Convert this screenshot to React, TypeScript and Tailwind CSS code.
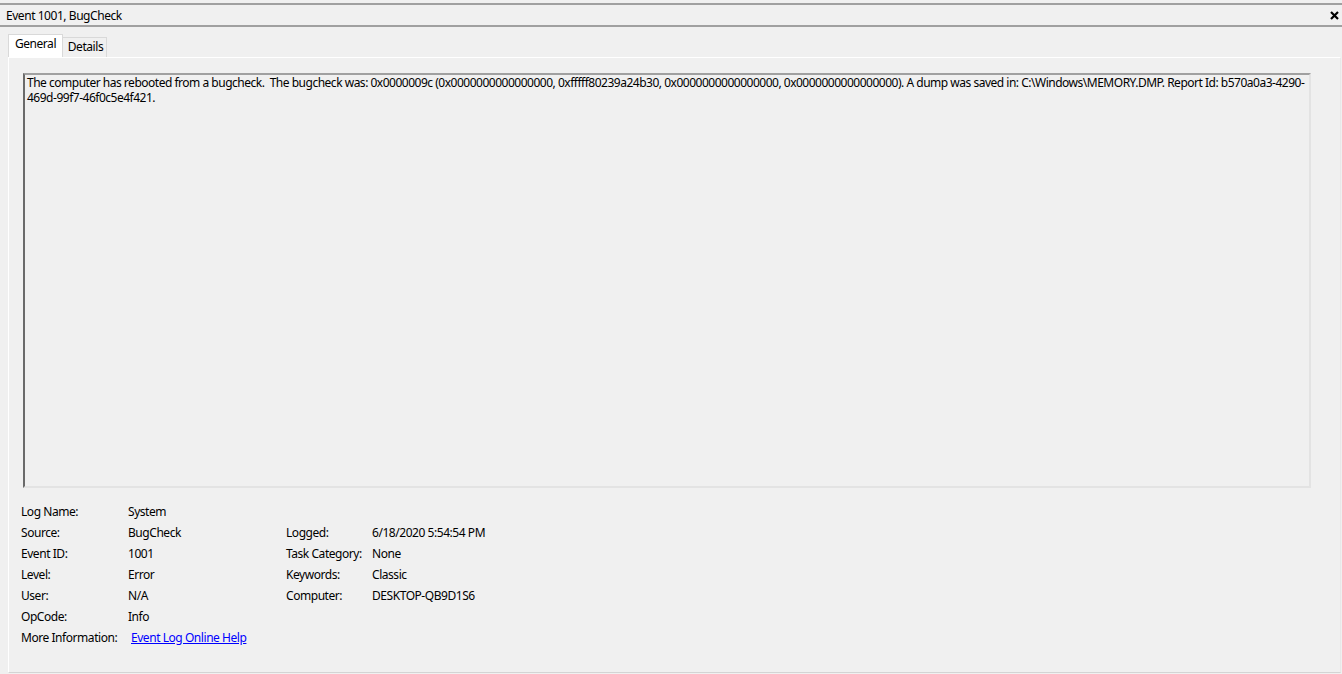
import React from "react";

const rows: [string, React.ReactNode, string?, string?][] = [
  ["Log Name:", "System"],
  ["Source:", "BugCheck", "Logged:", "6/18/2020 5:54:54 PM"],
  ["Event ID:", "1001", "Task Category:", "None"],
  ["Level:", "Error", "Keywords:", "Classic"],
  ["User:", "N/A", "Computer:", "DESKTOP-QB9D1S6"],
  ["OpCode:", "Info"],
];

export default function App() {
  return (
    <div className="w-[1342px] h-[674px] bg-[#f0f0f0] flex flex-col text-[12px] tracking-[-0.45px] text-black font-['Noto_Sans','Liberation_Sans',sans-serif] overflow-hidden">
      <div className="h-[3px] shrink-0" />
      <div className="h-[2px] bg-[#a0a0a0] shrink-0" />
      <div className="h-[20px] shrink-0 flex items-center justify-between pl-[6px] pr-[3px]">
        <span className="leading-[16px] pt-[1px]">Event 1001, BugCheck</span>
        <svg width="9" height="9" viewBox="0 0 9 9">
          <path d="M1 1 L8 8 M8 1 L1 8" stroke="#000" strokeWidth="2.2" />
        </svg>
      </div>
      <div className="h-[2px] bg-[#a0a0a0] shrink-0" />
      <div className="h-[7px] shrink-0" />
      <div className="flex items-end pl-[8px] shrink-0 h-[23px]">
        <div className="h-[23px] w-[55px] bg-white border border-b-0 border-[#d9d9d9] flex items-start justify-center pt-[1px] leading-[16px] relative z-10">
          General
        </div>
        <div className="h-[20px] w-[44px] bg-[#f0f0f0] border border-l-0 border-b-0 border-[#d9d9d9] flex items-start justify-center pt-[1px] pl-[2px] leading-[16px]">
          Details
        </div>
      </div>
      <div className="ml-[8px] mr-[1px] h-[616px] shrink-0 border-t border-l border-white border-b border-r border-b-[#d4d4d4] border-r-[#e8e8e8] bg-[#f0f0f0] flex flex-col">
        <div className="ml-[14px] mt-[15px] w-[1288px] h-[415px] border-t-2 border-l-2 border-t-[#a0a0a0] border-l-[#6a6a6a] border-r-2 border-b-2 border-r-[#e3e3e3] border-b-[#e3e3e3] px-[2px] pt-0 leading-[15px] tracking-[-0.49px] whitespace-nowrap">
          The computer has rebooted from a bugcheck.&nbsp; The bugcheck was: 0x0000009c (0x0000000000000000, 0xfffff80239a24b30, 0x0000000000000000, 0x0000000000000000). A dump was saved in: C:\Windows\MEMORY.DMP. Report Id: b570a0a3-4290-
          <br />
          469d-99f7-46f0c5e4f421.
        </div>
        <div className="ml-[12px] mt-[13px] grid grid-cols-[107px_158px_86px_1fr] auto-rows-[21px] leading-[21px]">
          {rows.map(([a, b, c, d], i) => (
            <React.Fragment key={i}>
              <div>{a}</div>
              <div>{b}</div>
              <div>{c ?? ""}</div>
              <div>{d ?? ""}</div>
            </React.Fragment>
          ))}
          <div>More Information:</div>
          <div className="col-span-3 pl-[3px]">
            <span className="text-[#0000ff] underline">Event Log Online Help</span>
          </div>
        </div>
      </div>
    </div>
  );
}
